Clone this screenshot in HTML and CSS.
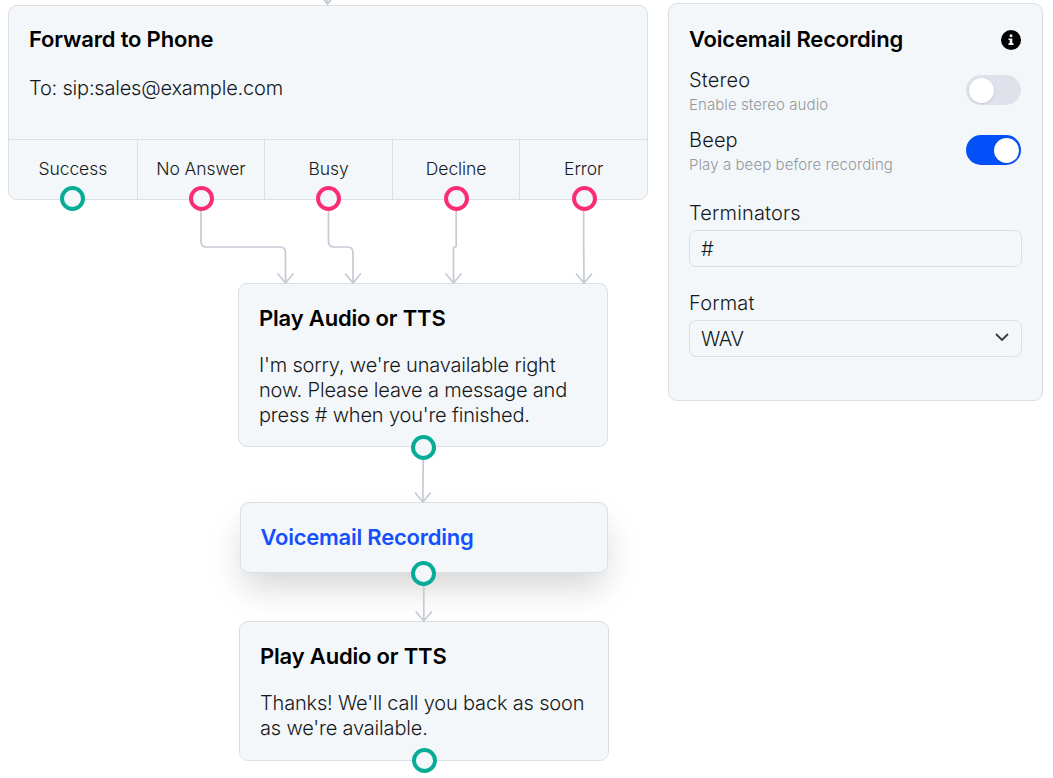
FILE: index.html
```html
<!DOCTYPE html>
<html lang="en">
<head>
<meta charset="utf-8">
<title>Call Flow</title>
<link rel="stylesheet" href="styles.css">
</head>
<body>
<main class="canvas">
  <section class="node node-forward">
    <div class="node-body">
      <h2 class="title">Forward to Phone</h2>
      <p class="text text-sip">To: sip:sales@example.com</p>
    </div>
    <div class="outcomes">
      <div class="outcome">Success<span class="port port-ok"></span></div>
      <div class="outcome">No Answer<span class="port port-fail"></span></div>
      <div class="outcome">Busy<span class="port port-fail"></span></div>
      <div class="outcome">Decline<span class="port port-fail"></span></div>
      <div class="outcome">Error<span class="port port-fail"></span></div>
    </div>
  </section>

  <section class="node node-message">
    <h2 class="title">Play Audio or TTS</h2>
    <p class="text">I'm sorry, we're unavailable right<br>now. Please leave a message and<br>press # when you're finished.</p>
    <span class="port port-ok"></span>
  </section>

  <section class="node node-voicemail">
    <h2 class="title title-active">Voicemail Recording</h2>
    <span class="port port-ok"></span>
  </section>

  <section class="node node-thanks">
    <h2 class="title">Play Audio or TTS</h2>
    <p class="text text-thanks">Thanks! We'll call you back as soon<br>as we're available.</p>
    <span class="port port-ok"></span>
  </section>

  <svg class="links" width="1053" height="778" viewBox="0 0 1053 778" fill="none">
    <path d="M327.5-8V4M319.5-5.500L327.500 4L335.500-5.500"/>
    <path d="M201 211V241.500Q201 247 206.500 247H280Q285.500 247 285.500 252.500V283M277.500 273.500L285.500 283L293.500 273.500"/>
    <path d="M328.500 211V241.500Q328.500 247 334 247H347.500Q353 247 353 252.500V283M345 273.500L353 283L361 273.500"/>
    <path d="M456.200 211V245Q456.200 247 455 247Q453.500 247 453.500 249V283M445.500 273.500L453.500 283L461.500 273.500"/>
    <path d="M583.700 211V247L584 283M576 273.500L584 283L592 273.500"/>
    <path d="M423.200 460L422.800 502M415 492.500L422.900 502L430.800 492.500"/>
    <path d="M423.800 586V621M415.800 611.500L423.800 621L431.800 611.500"/>
  </svg>

  <aside class="panel">
    <header class="panel-head">
      <h2 class="title">Voicemail Recording</h2>
      <svg class="info" viewBox="0 0 20 20"><circle cx="10" cy="10" r="10" fill="#000"/><path d="M8.700 4.600h2.600v2.500H8.700zM7.500 8.400h3.800v4.900h1.200V15H7.500v-1.700h1.200V10H7.500z" fill="#f3f7fa"/></svg>
    </header>
    <div class="setting">
      <div><div class="label">Stereo</div><div class="hint">Enable stereo audio</div></div>
      <span class="toggle"><span class="knob"></span></span>
    </div>
    <div class="setting">
      <div><div class="label">Beep</div><div class="hint">Play a beep before recording</div></div>
      <span class="toggle toggle-on"><span class="knob"></span></span>
    </div>
    <div class="field field-first">
      <div class="label">Terminators</div>
      <div class="control">#</div>
    </div>
    <div class="field">
      <div class="label">Format</div>
      <div class="control">WAV<svg class="chevron" width="14" height="9" viewBox="0 0 14 9" fill="none"><path d="M1 1l6 6 6-6" stroke="#343a40" stroke-width="1.800"/></svg></div>
    </div>
  </aside>
</main>
</body>
</html>
```
FILE: styles.css
```css
* { box-sizing: border-box; }
body { margin: 0; background: #fff; font-family: Inter, "Liberation Sans", sans-serif; font-weight: 350; color: #16191c; }
h2, p { margin: 0; }

.canvas { position: relative; width: 1053px; height: 778px; overflow: hidden; }
.node, .panel { position: absolute; background: #f3f7fa; border: 1px solid #dbdfe3; border-radius: 9px; }
.node { padding: 20px; }
.node-forward { left: 8px; top: 5px; width: 640px; height: 195px; padding: 0; display: flex; flex-direction: column; }
.node-body { flex: 1; padding: 19px 20px; }
.node-message { left: 238px; top: 283px; width: 370px; height: 164px; }
.node-voicemail { left: 239.500px; top: 502px; width: 368px; height: 71px; box-shadow: 0 18px 34px -4px rgba(0, 0, 0, .17); }
.node-thanks { left: 239px; top: 621px; width: 370px; height: 140px; }

.title { font-size: 22px; line-height: 28px; font-weight: 600; letter-spacing: -.18px; color: #000; white-space: nowrap; }
.title-active { color: #1550ff; font-weight: 570; letter-spacing: -.24px; }
.text { margin-top: 21px; font-size: 20px; line-height: 25px; letter-spacing: -.17px; white-space: nowrap; }
.text-sip { margin-top: 23px; letter-spacing: -.2px; }
.text-thanks { letter-spacing: -.18px; }

.outcomes { display: grid; grid-template-columns: repeat(5, 1fr); height: 60px; border-top: 1px solid #dbdfe3; }
.outcome { position: relative; display: flex; justify-content: center; align-items: center; padding-bottom: 2px; font-size: 17.500px; letter-spacing: -.08px; border-left: 1px solid #dbdfe3; }
.outcome:first-child { border-left: 0; }
.port { position: absolute; left: 50%; bottom: -13.500px; width: 25px; height: 25px; margin-left: -12.500px; border: 4px solid; border-radius: 50%; background: #f3f7fa; }
.outcome .port { bottom: -12px; margin-left: -12px; }
.outcome:first-child .port { margin-left: -12.500px; }
.node-thanks > .port { bottom: -13px; }
.port-ok { border-color: #06ac97; }
.port-fail { border-color: #fa2d74; }

.links { position: absolute; left: 0; top: 0; stroke: #c5cad4; stroke-width: 1.700; pointer-events: none; }

.panel { left: 668px; top: 3px; width: 375px; height: 398px; padding: 21px 21px 22px 20px; }
.panel-head { display: flex; align-items: center; justify-content: space-between; margin-bottom: 8px; }
.info { width: 20px; height: 20px; margin-top: 1px; }
.setting { display: flex; align-items: center; justify-content: space-between; height: 60px; }
.label { font-size: 20px; line-height: 26px; letter-spacing: .15px; }
.hint { font-size: 15px; line-height: 22px; padding-top: 1px; margin-bottom: -1px; color: #94979b; letter-spacing: .08px; }
.toggle { display: flex; align-items: center; width: 55px; height: 30px; margin-bottom: 2px; padding: 2.500px; border-radius: 15px; background: #dfe2ea; }
.toggle-on { justify-content: flex-end; background: #0450f8; }
.knob { width: 25px; height: 25px; border-radius: 50%; background: #fff; box-shadow: 0 1px 3px rgba(0, 0, 0, .12); }
.field { margin-bottom: 23px; }
.field-first { margin-top: 19px; }
.control { display: flex; align-items: center; justify-content: space-between; height: 37px; margin-top: 4px; margin-right: -1px; padding: 0 12px 0 11px; border: 1px solid #dbdfe3; border-radius: 7px; font-size: 20px; letter-spacing: -.4px; }
.chevron { margin-bottom: 3px; }
```
